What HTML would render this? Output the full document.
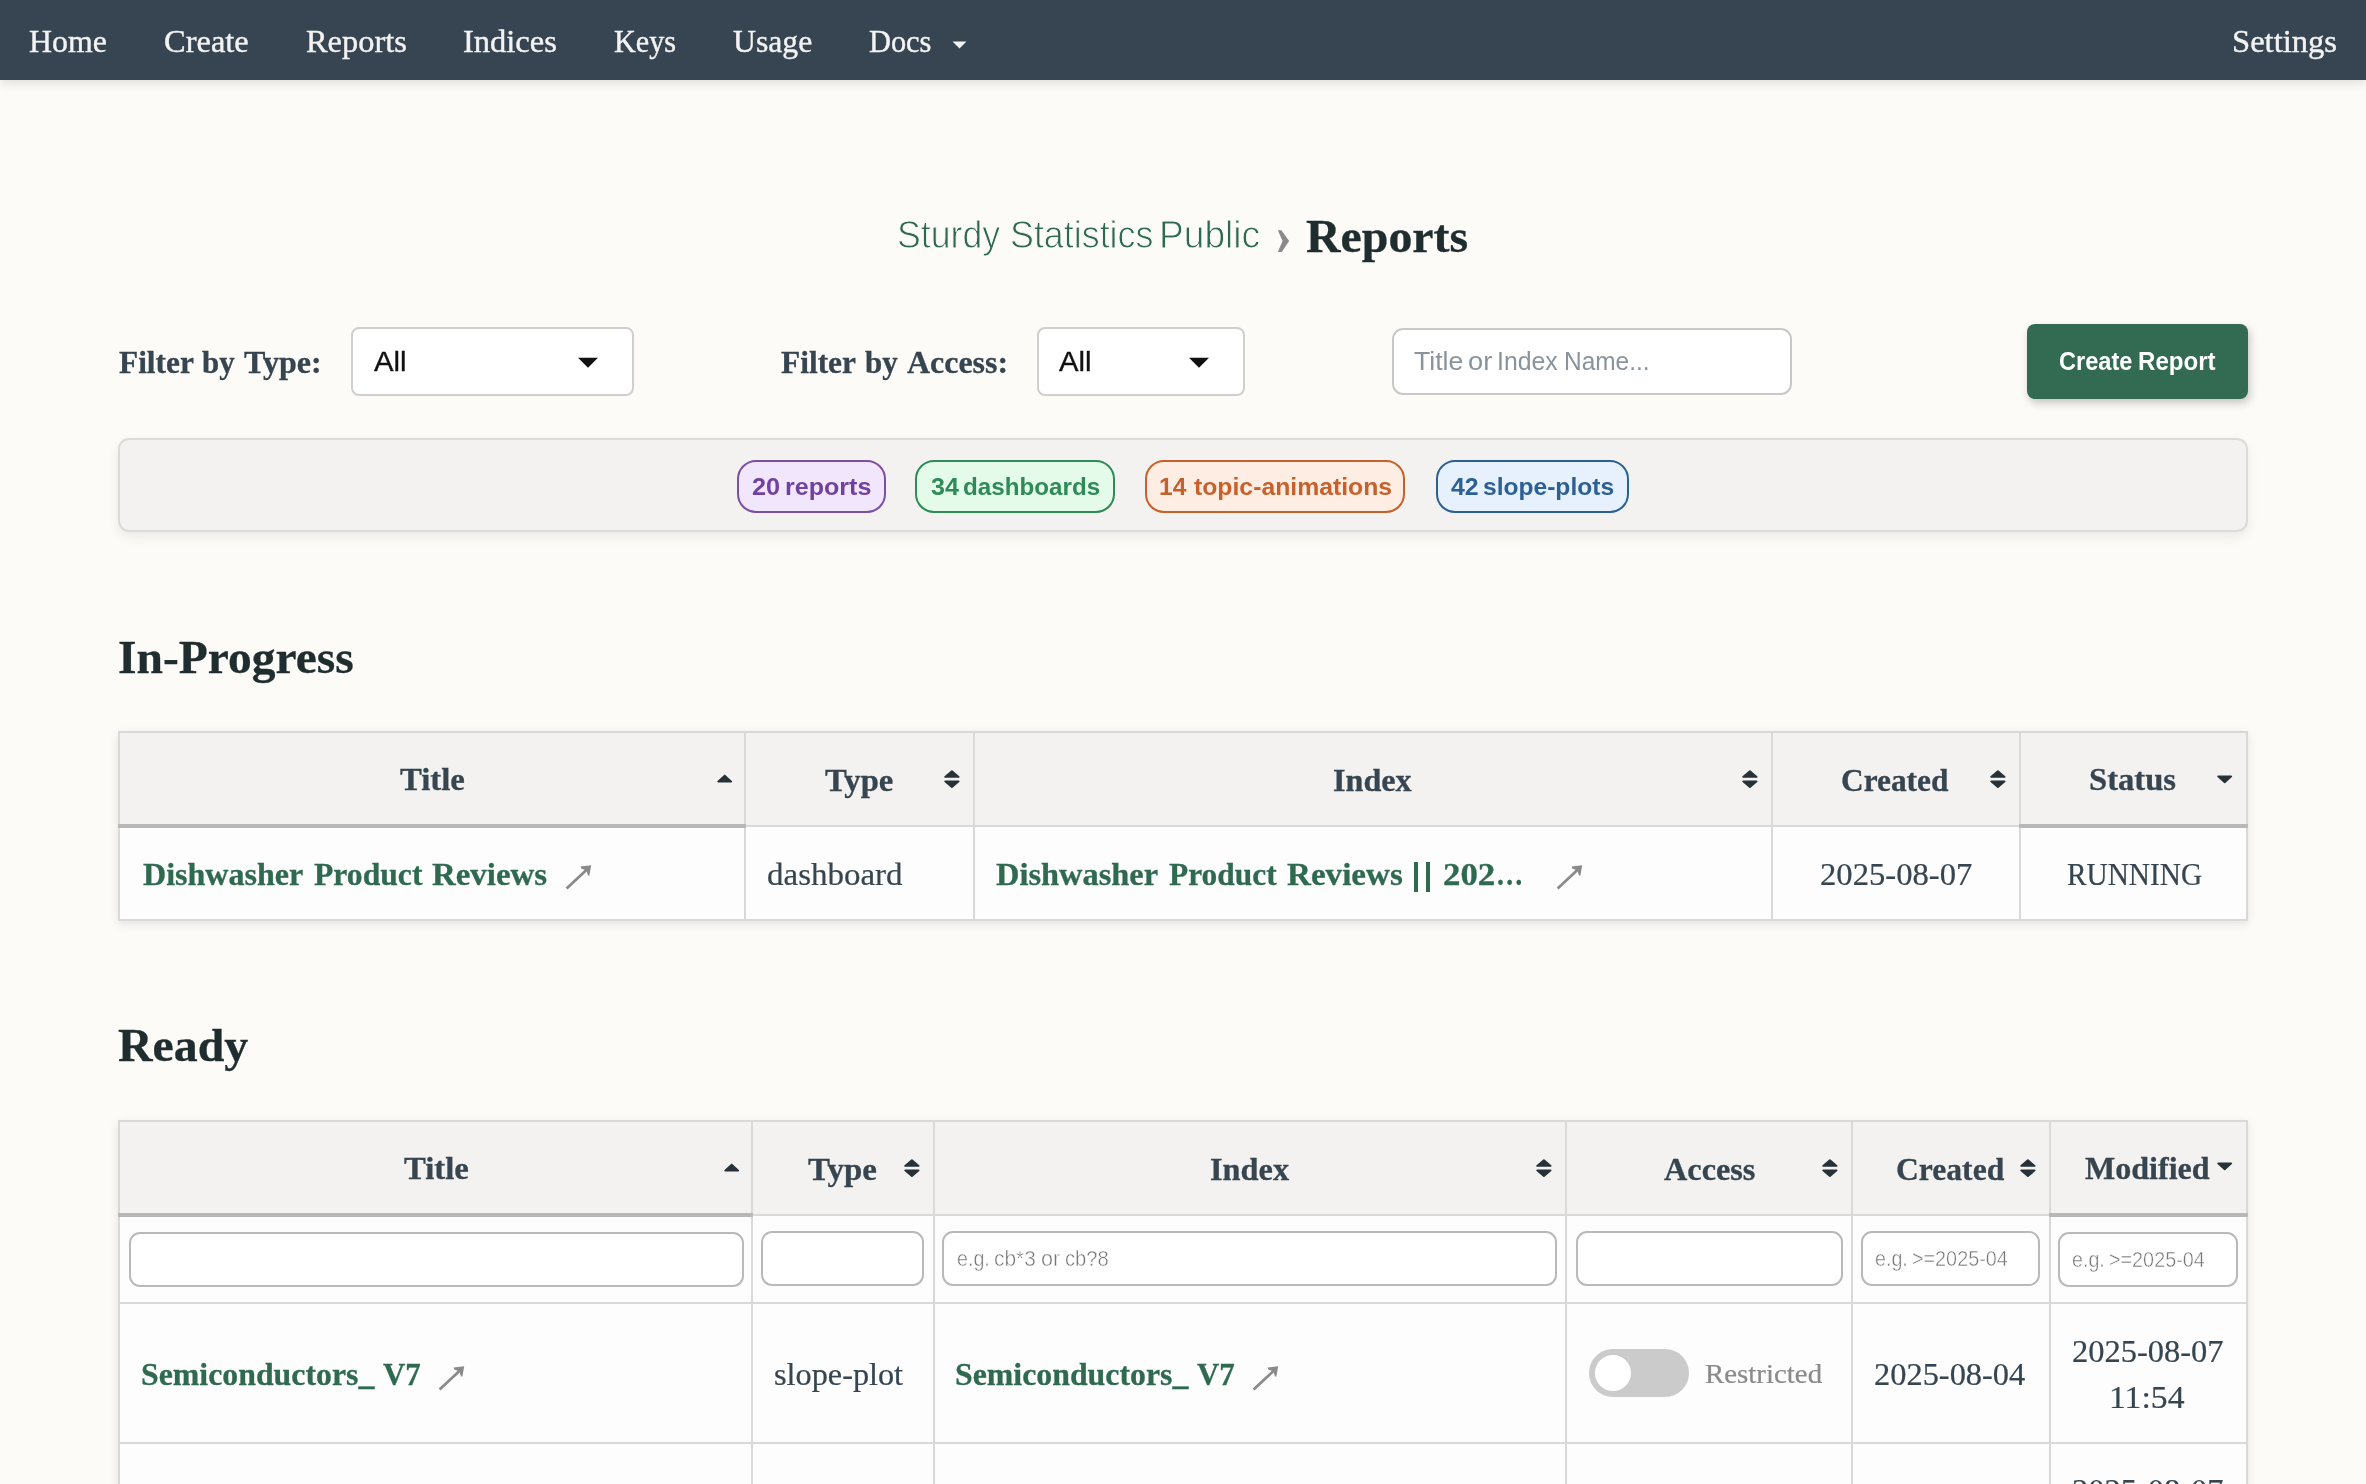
<!DOCTYPE html>
<html lang="en"><head><meta charset="utf-8"><title>Reports</title>
<style>
html,body{margin:0;padding:0;width:2366px;height:1484px;overflow:hidden;background:#fcfbf8}
#pg{position:relative;width:2366px;height:1484px;overflow:hidden;background:#fcfbf8}
#nav{position:absolute;left:0;top:0;width:2366px;height:80px;background:#374552;box-shadow:0 3px 10px rgba(0,0,0,.12)}
#tx{position:absolute;left:0;top:0;width:2366px;height:1484px;will-change:transform}
.r{position:absolute;box-sizing:border-box}
.i{position:absolute;display:block;overflow:visible}
.t{position:absolute;white-space:pre;line-height:1;transform-origin:0 0}
.s{font-family:"Liberation Serif",serif}
.n{font-family:"Liberation Sans",sans-serif}
.b{font-weight:700}
.s{-webkit-text-stroke:0.22px currentColor}
.s.b{-webkit-text-stroke:0.3px currentColor}
</style></head>
<body>
<div id="pg">
<div id="nav"></div>
<svg class="i" style="left:951px;top:40px" width="18" height="10" viewBox="0 0 18 10"><path d="M1.5 1.5h14l-7 7z" fill="#f3f3f3"/></svg>
<svg class="i" style="left:1270px;top:225px" width="26" height="32" viewBox="1270 225 26 32"><path d="M1277.86 230.16H1281.39L1289.14 240.94L1281.73 251.89H1277.86L1282.57 240.94Z" fill="#8a8a8a"/></svg>
<div class="r" style="left:351px;top:327px;width:283px;height:69px;background:#fff;border:2px solid #cfcfcf;border-radius:8px"></div>
<div class="r" style="left:1037px;top:327px;width:208px;height:69px;background:#fff;border:2px solid #cfcfcf;border-radius:8px"></div>
<svg class="i" style="left:576.7px;top:356px" width="22" height="13" viewBox="0 0 22 13"><path d="M1 1.8h20L11 11.8z" fill="#111"/></svg>
<svg class="i" style="left:1187.8px;top:356px" width="22" height="13" viewBox="0 0 22 13"><path d="M1 1.8h20L11 11.8z" fill="#111"/></svg>
<div class="r" style="left:1392px;top:328px;width:400px;height:67px;background:#fff;border:2px solid #c8c8c8;border-radius:11px"></div>
<div class="r" style="left:2027px;top:324px;width:221px;height:75px;background:#326b52;border-radius:8px;box-shadow:2px 4px 9px rgba(0,0,0,.22)"></div>
<div class="r" style="left:118px;top:438px;width:2130px;height:94px;background:#f3f2f0;border:2px solid #dbdbdb;border-radius:11px;box-shadow:0 5px 12px rgba(0,0,0,.07)"></div>
<div class="r" style="left:737px;top:460px;width:149px;height:53px;background:#f1e6fb;border:2px solid #7b4fa3;border-radius:19px"></div>
<div class="r" style="left:915px;top:460px;width:200px;height:53px;background:#e4fbe9;border:2px solid #2e8b57;border-radius:19px"></div>
<div class="r" style="left:1145px;top:460px;width:260px;height:53px;background:#fdede2;border:2px solid #c8602b;border-radius:19px"></div>
<div class="r" style="left:1436px;top:460px;width:193px;height:53px;background:#e6f1fd;border:2px solid #2c5f94;border-radius:19px"></div>
<div class="r" style="left:118px;top:731px;width:2130px;height:190px;background:#fdfdfd;box-shadow:0 3px 9px rgba(0,0,0,.10)"></div>
<div class="r" style="left:118px;top:731px;width:2130px;height:95px;background:#f3f2f0"></div>
<div class="r" style="left:118px;top:731px;width:2130px;height:190px;border:2px solid #d9d9d9"></div>
<div class="r" style="left:118px;top:825px;width:2130px;height:2px;background:#d9d9d9"></div>
<div class="r" style="left:744px;top:731px;width:2px;height:190px;background:#d9d9d9"></div>
<div class="r" style="left:973px;top:731px;width:2px;height:190px;background:#d9d9d9"></div>
<div class="r" style="left:1771px;top:731px;width:2px;height:190px;background:#d9d9d9"></div>
<div class="r" style="left:2019px;top:731px;width:2px;height:190px;background:#d9d9d9"></div>
<div class="r" style="left:118px;top:824px;width:628px;height:4px;background:#b8b8b8"></div>
<div class="r" style="left:2019px;top:824px;width:229px;height:4px;background:#b8b8b8"></div>
<svg class="i" style="left:717.3px;top:774.1px" width="15.4" height="8.8" viewBox="0 0 16 9" preserveAspectRatio="none"><path d="M1.2 8.6h13.6a.9.9 0 0 0 .65-1.55L8.65.9a.92.92 0 0 0-1.3 0L.55 7.05A.9.9 0 0 0 1.2 8.6z" fill="#263238"/></svg>
<svg class="i" style="left:944px;top:769.6px" width="15.8" height="18.3" viewBox="0 0 16 19" preserveAspectRatio="none"><path d="M1.2 8h13.6a.9.9 0 0 0 .65-1.55L8.65.6a.92.92 0 0 0-1.3 0L.55 6.45A.9.9 0 0 0 1.2 8z M1.2 11h13.6a.9.9 0 0 1 .65 1.55L8.65 18.4a.92.92 0 0 1-1.3 0L.55 12.55A.9.9 0 0 1 1.2 11z" fill="#263238"/></svg>
<svg class="i" style="left:1742px;top:770.2px" width="15.8" height="18.3" viewBox="0 0 16 19" preserveAspectRatio="none"><path d="M1.2 8h13.6a.9.9 0 0 0 .65-1.55L8.65.6a.92.92 0 0 0-1.3 0L.55 6.45A.9.9 0 0 0 1.2 8z M1.2 11h13.6a.9.9 0 0 1 .65 1.55L8.65 18.4a.92.92 0 0 1-1.3 0L.55 12.55A.9.9 0 0 1 1.2 11z" fill="#263238"/></svg>
<svg class="i" style="left:1990px;top:770.2px" width="15.8" height="18.3" viewBox="0 0 16 19" preserveAspectRatio="none"><path d="M1.2 8h13.6a.9.9 0 0 0 .65-1.55L8.65.6a.92.92 0 0 0-1.3 0L.55 6.45A.9.9 0 0 0 1.2 8z M1.2 11h13.6a.9.9 0 0 1 .65 1.55L8.65 18.4a.92.92 0 0 1-1.3 0L.55 12.55A.9.9 0 0 1 1.2 11z" fill="#263238"/></svg>
<svg class="i" style="left:2217.2px;top:775.2px" width="15.4" height="8.8" viewBox="0 0 16 9" preserveAspectRatio="none"><path d="M1.2 .4h13.6a.9.9 0 0 1 .65 1.55L8.65 8.1a.92.92 0 0 1-1.3 0L.55 1.95A.9.9 0 0 1 1.2 .4z" fill="#263238"/></svg>
<div class="r" style="left:1414.1px;top:861.6px;width:3.6px;height:30.6px;background:#2f6a50"></div>
<div class="r" style="left:1426.3px;top:861.6px;width:3.6px;height:30.6px;background:#2f6a50"></div>
<svg class="i" style="left:564.5px;top:863.6px" width="28" height="27" viewBox="0 0 28 27"><path d="M1.6 24.6 L22.2 5.2" stroke="#8a8a8a" stroke-width="2.7" fill="none"/><path d="M26.2 1.2 L15.6 2.6 L16.2 4.4 L21.4 6.4 L23 11.4 L24.4 11.6 Z" fill="#8a8a8a"/></svg>
<svg class="i" style="left:1555.5px;top:863.6px" width="28" height="27" viewBox="0 0 28 27"><path d="M1.6 24.6 L22.2 5.2" stroke="#8a8a8a" stroke-width="2.7" fill="none"/><path d="M26.2 1.2 L15.6 2.6 L16.2 4.4 L21.4 6.4 L23 11.4 L24.4 11.6 Z" fill="#8a8a8a"/></svg>
<div class="r" style="left:118px;top:1120px;width:2130px;height:400px;background:#fdfdfd;box-shadow:0 3px 9px rgba(0,0,0,.10)"></div>
<div class="r" style="left:118px;top:1120px;width:2130px;height:95px;background:#f3f2f0"></div>
<div class="r" style="left:118px;top:1120px;width:2130px;height:400px;border:2px solid #d9d9d9"></div>
<div class="r" style="left:118px;top:1214px;width:2130px;height:2px;background:#d9d9d9"></div>
<div class="r" style="left:118px;top:1302px;width:2130px;height:2px;background:#d9d9d9"></div>
<div class="r" style="left:118px;top:1442px;width:2130px;height:2px;background:#d9d9d9"></div>
<div class="r" style="left:751px;top:1120px;width:2px;height:400px;background:#d9d9d9"></div>
<div class="r" style="left:933px;top:1120px;width:2px;height:400px;background:#d9d9d9"></div>
<div class="r" style="left:1565px;top:1120px;width:2px;height:400px;background:#d9d9d9"></div>
<div class="r" style="left:1851px;top:1120px;width:2px;height:400px;background:#d9d9d9"></div>
<div class="r" style="left:2049px;top:1120px;width:2px;height:400px;background:#d9d9d9"></div>
<div class="r" style="left:118px;top:1213px;width:635px;height:4px;background:#b8b8b8"></div>
<div class="r" style="left:2049px;top:1213px;width:199px;height:4px;background:#b8b8b8"></div>
<svg class="i" style="left:724.3px;top:1162.6000000000001px" width="15.4" height="8.8" viewBox="0 0 16 9" preserveAspectRatio="none"><path d="M1.2 8.6h13.6a.9.9 0 0 0 .65-1.55L8.65.9a.92.92 0 0 0-1.3 0L.55 7.05A.9.9 0 0 0 1.2 8.6z" fill="#263238"/></svg>
<svg class="i" style="left:904px;top:1159px" width="15.8" height="18.3" viewBox="0 0 16 19" preserveAspectRatio="none"><path d="M1.2 8h13.6a.9.9 0 0 0 .65-1.55L8.65.6a.92.92 0 0 0-1.3 0L.55 6.45A.9.9 0 0 0 1.2 8z M1.2 11h13.6a.9.9 0 0 1 .65 1.55L8.65 18.4a.92.92 0 0 1-1.3 0L.55 12.55A.9.9 0 0 1 1.2 11z" fill="#263238"/></svg>
<svg class="i" style="left:1536px;top:1159px" width="15.8" height="18.3" viewBox="0 0 16 19" preserveAspectRatio="none"><path d="M1.2 8h13.6a.9.9 0 0 0 .65-1.55L8.65.6a.92.92 0 0 0-1.3 0L.55 6.45A.9.9 0 0 0 1.2 8z M1.2 11h13.6a.9.9 0 0 1 .65 1.55L8.65 18.4a.92.92 0 0 1-1.3 0L.55 12.55A.9.9 0 0 1 1.2 11z" fill="#263238"/></svg>
<svg class="i" style="left:1822px;top:1159px" width="15.8" height="18.3" viewBox="0 0 16 19" preserveAspectRatio="none"><path d="M1.2 8h13.6a.9.9 0 0 0 .65-1.55L8.65.6a.92.92 0 0 0-1.3 0L.55 6.45A.9.9 0 0 0 1.2 8z M1.2 11h13.6a.9.9 0 0 1 .65 1.55L8.65 18.4a.92.92 0 0 1-1.3 0L.55 12.55A.9.9 0 0 1 1.2 11z" fill="#263238"/></svg>
<svg class="i" style="left:2020px;top:1159px" width="15.8" height="18.3" viewBox="0 0 16 19" preserveAspectRatio="none"><path d="M1.2 8h13.6a.9.9 0 0 0 .65-1.55L8.65.6a.92.92 0 0 0-1.3 0L.55 6.45A.9.9 0 0 0 1.2 8z M1.2 11h13.6a.9.9 0 0 1 .65 1.55L8.65 18.4a.92.92 0 0 1-1.3 0L.55 12.55A.9.9 0 0 1 1.2 11z" fill="#263238"/></svg>
<svg class="i" style="left:2217.2px;top:1162.3px" width="15.4" height="8.8" viewBox="0 0 16 9" preserveAspectRatio="none"><path d="M1.2 .4h13.6a.9.9 0 0 1 .65 1.55L8.65 8.1a.92.92 0 0 1-1.3 0L.55 1.95A.9.9 0 0 1 1.2 .4z" fill="#263238"/></svg>
<div class="r" style="left:129px;top:1232.4px;width:615px;height:54.4px;background:#fff;border:2px solid #b9b9b9;border-radius:11px"></div>
<div class="r" style="left:761px;top:1231.4px;width:163px;height:54.4px;background:#fff;border:2px solid #b9b9b9;border-radius:11px"></div>
<div class="r" style="left:942px;top:1231.4px;width:615px;height:54.4px;background:#fff;border:2px solid #b9b9b9;border-radius:11px"></div>
<div class="r" style="left:1576px;top:1231.4px;width:267px;height:54.4px;background:#fff;border:2px solid #b9b9b9;border-radius:11px"></div>
<div class="r" style="left:1861px;top:1231.4px;width:179px;height:54.4px;background:#fff;border:2px solid #b9b9b9;border-radius:11px"></div>
<div class="r" style="left:2058px;top:1232.4px;width:180px;height:54.4px;background:#fff;border:2px solid #b9b9b9;border-radius:11px"></div>
<svg class="i" style="left:438px;top:1364.6px" width="28" height="27" viewBox="0 0 28 27"><path d="M1.6 24.6 L22.2 5.2" stroke="#8a8a8a" stroke-width="2.7" fill="none"/><path d="M26.2 1.2 L15.6 2.6 L16.2 4.4 L21.4 6.4 L23 11.4 L24.4 11.6 Z" fill="#8a8a8a"/></svg>
<svg class="i" style="left:1252px;top:1364.6px" width="28" height="27" viewBox="0 0 28 27"><path d="M1.6 24.6 L22.2 5.2" stroke="#8a8a8a" stroke-width="2.7" fill="none"/><path d="M26.2 1.2 L15.6 2.6 L16.2 4.4 L21.4 6.4 L23 11.4 L24.4 11.6 Z" fill="#8a8a8a"/></svg>
<div class="r" style="left:1589px;top:1349px;width:100px;height:48px;background:#cbcbcb;border-radius:24px"></div>
<div class="r" style="left:1594.6px;top:1354.6px;width:36.6px;height:36.6px;background:#fff;border-radius:50%"></div>
<div id="tx">
<span class="t s" style="left:29.02px;top:26px;font-size:31.45px;transform:scaleX(1.0134);color:#f3f3f3;-webkit-text-stroke:0.4px currentColor">Home</span>
<span class="t s" style="left:164.37px;top:26px;font-size:31.45px;transform:scaleX(1.0327);color:#f3f3f3;-webkit-text-stroke:0.4px currentColor">Create</span>
<span class="t s" style="left:306.43px;top:26px;font-size:31.45px;transform:scaleX(1.0306);color:#f3f3f3;-webkit-text-stroke:0.4px currentColor">Reports</span>
<span class="t s" style="left:462.78px;top:26px;font-size:31.45px;transform:scaleX(1.0330);color:#f3f3f3;-webkit-text-stroke:0.4px currentColor">Indices</span>
<span class="t s" style="left:613.91px;top:26px;font-size:31.45px;transform:scaleX(0.9607);color:#f3f3f3;-webkit-text-stroke:0.4px currentColor">Keys</span>
<span class="t s" style="left:732.50px;top:26px;font-size:31.45px;transform:scaleX(1.0081);color:#f3f3f3;-webkit-text-stroke:0.4px currentColor">Usage</span>
<span class="t s" style="left:868.90px;top:26px;font-size:31.45px;transform:scaleX(0.9657);color:#f3f3f3;-webkit-text-stroke:0.4px currentColor">Docs</span>
<span class="t s" style="left:2232.25px;top:26px;font-size:31.45px;transform:scaleX(1.0368);color:#f3f3f3;-webkit-text-stroke:0.4px currentColor">Settings</span>
<span class="t n" style="left:897.10px;top:215px;font-size:39.13px;transform:scaleX(0.9113);color:#2f6a50;-webkit-text-stroke:0.9px #fcfbf8">Sturdy</span>
<span class="t n" style="left:1009.89px;top:215px;font-size:39.13px;transform:scaleX(0.9161);color:#2f6a50;-webkit-text-stroke:0.9px #fcfbf8">Statistics</span>
<span class="t n" style="left:1159.46px;top:215px;font-size:39.13px;transform:scaleX(0.9490);color:#2f6a50;-webkit-text-stroke:0.9px #fcfbf8">Public</span>
<span class="t s b" style="left:1306.12px;top:214px;font-size:45.76px;transform:scaleX(1.0456);color:#1f2d2f;">Reports</span>
<span class="t s b" style="left:118.81px;top:347px;font-size:31.29px;transform:scaleX(1.0022);color:#36454f;">Filter</span>
<span class="t s b" style="left:202.49px;top:347px;font-size:31.29px;transform:scaleX(0.9869);color:#36454f;">by</span>
<span class="t s b" style="left:244.41px;top:347px;font-size:31.29px;transform:scaleX(1.0244);color:#36454f;">Type:</span>
<span class="t s b" style="left:780.81px;top:347px;font-size:31.29px;transform:scaleX(1.0041);color:#36454f;">Filter</span>
<span class="t s b" style="left:865.29px;top:347px;font-size:31.29px;transform:scaleX(0.9893);color:#36454f;">by</span>
<span class="t s b" style="left:907.31px;top:347px;font-size:31.29px;transform:scaleX(1.0206);color:#36454f;">Access:</span>
<span class="t n" style="left:373.60px;top:347px;font-size:28.41px;transform:scaleX(1.0299);color:#111;-webkit-text-stroke:0.35px currentColor">All</span>
<span class="t n" style="left:1059.00px;top:347px;font-size:28.41px;transform:scaleX(1.0299);color:#111;-webkit-text-stroke:0.35px currentColor">All</span>
<span class="t n" style="left:1414.29px;top:348px;font-size:26.67px;transform:scaleX(0.9982);color:#8a939c;">Title</span>
<span class="t n" style="left:1468.40px;top:348px;font-size:26.67px;transform:scaleX(1.0224);color:#8a939c;">or</span>
<span class="t n" style="left:1496.96px;top:348px;font-size:26.67px;transform:scaleX(0.9302);color:#8a939c;">Index</span>
<span class="t n" style="left:1563.88px;top:348px;font-size:26.67px;transform:scaleX(0.9170);color:#8a939c;">Name...</span>
<span class="t n b" style="left:2059.49px;top:349px;font-size:25.94px;transform:scaleX(0.9101);color:#ffffff;">Create</span>
<span class="t n b" style="left:2138.30px;top:349px;font-size:25.94px;transform:scaleX(0.9285);color:#ffffff;">Report</span>
<span class="t n b" style="left:752.09px;top:475px;font-size:24.64px;transform:scaleX(1.0270);color:#6f42a0;">20</span>
<span class="t n b" style="left:785.04px;top:475px;font-size:24.64px;transform:scaleX(1.0179);color:#6f42a0;">reports</span>
<span class="t n b" style="left:930.62px;top:475px;font-size:24.64px;transform:scaleX(1.0191);color:#2e8b57;">34</span>
<span class="t n b" style="left:963.19px;top:475px;font-size:24.64px;transform:scaleX(0.9825);color:#2e8b57;">dashboards</span>
<span class="t n b" style="left:1159.30px;top:475px;font-size:24.64px;transform:scaleX(0.9979);color:#c8602b;">14</span>
<span class="t n b" style="left:1193.77px;top:475px;font-size:24.64px;transform:scaleX(1.0055);color:#c8602b;">topic-animations</span>
<span class="t n b" style="left:1451.13px;top:475px;font-size:24.64px;transform:scaleX(1.0102);color:#2c5f94;">42</span>
<span class="t n b" style="left:1483.41px;top:475px;font-size:24.64px;transform:scaleX(0.9980);color:#2c5f94;">slope-plots</span>
<span class="t s b" style="left:118.01px;top:635px;font-size:45.76px;transform:scaleX(1.0384);color:#1f2d2f;">In-Progress</span>
<span class="t s b" style="left:118.33px;top:1023px;font-size:45.92px;transform:scaleX(1.0426);color:#1f2d2f;">Ready</span>
<span class="t s b" style="left:399.77px;top:764px;font-size:31.92px;transform:scaleX(1.0260);color:#36454f;">Title</span>
<span class="t s b" style="left:825.17px;top:765px;font-size:31.92px;transform:scaleX(1.0235);color:#36454f;">Type</span>
<span class="t s b" style="left:1333.35px;top:765px;font-size:31.92px;transform:scaleX(1.0076);color:#36454f;">Index</span>
<span class="t s b" style="left:1841.42px;top:765px;font-size:31.92px;transform:scaleX(0.9822);color:#36454f;">Created</span>
<span class="t s b" style="left:2089.46px;top:764px;font-size:31.92px;transform:scaleX(1.0222);color:#36454f;">Status</span>
<span class="t s b" style="left:142.54px;top:859px;font-size:31.76px;transform:scaleX(1.0095);color:#2f6a50;">Dishwasher</span>
<span class="t s b" style="left:313.80px;top:859px;font-size:31.76px;transform:scaleX(0.9971);color:#2f6a50;">Product</span>
<span class="t s b" style="left:432.33px;top:859px;font-size:31.76px;transform:scaleX(1.0364);color:#2f6a50;">Reviews</span>
<span class="t s" style="left:767.35px;top:859px;font-size:31.76px;transform:scaleX(1.0391);color:#36454f;">dashboard</span>
<span class="t s b" style="left:996.11px;top:859px;font-size:31.76px;transform:scaleX(1.0209);color:#2f6a50;">Dishwasher</span>
<span class="t s b" style="left:1169.00px;top:859px;font-size:31.76px;transform:scaleX(0.9897);color:#2f6a50;">Product</span>
<span class="t s b" style="left:1286.52px;top:859px;font-size:31.76px;transform:scaleX(1.0423);color:#2f6a50;">Reviews</span>
<span class="t s b" style="left:1442.70px;top:859px;font-size:31.76px;transform:scaleX(1.0973);color:#2f6a50;">202</span>
<span class="t s b" style="left:1496.09px;top:859px;font-size:31.76px;transform:scaleX(0.8570);color:#2f6a50;">…</span>
<span class="t s" style="left:1819.96px;top:859px;font-size:31.76px;transform:scaleX(1.0287);color:#36454f;">2025-08-07</span>
<span class="t s" style="left:2066.84px;top:859px;font-size:31.76px;transform:scaleX(0.9224);color:#36454f;">RUNNING</span>
<span class="t s b" style="left:403.58px;top:1153px;font-size:31.92px;transform:scaleX(1.0252);color:#36454f;">Title</span>
<span class="t s b" style="left:808.36px;top:1154px;font-size:31.92px;transform:scaleX(1.0309);color:#36454f;">Type</span>
<span class="t s b" style="left:1209.50px;top:1154px;font-size:31.92px;transform:scaleX(1.0131);color:#36454f;">Index</span>
<span class="t s b" style="left:1663.71px;top:1154px;font-size:31.92px;transform:scaleX(1.0118);color:#36454f;">Access</span>
<span class="t s b" style="left:1896.17px;top:1154px;font-size:31.92px;transform:scaleX(0.9905);color:#36454f;">Created</span>
<span class="t s b" style="left:2085.19px;top:1153px;font-size:31.92px;transform:scaleX(1.0045);color:#36454f;">Modified</span>
<span class="t n" style="left:956.74px;top:1248px;font-size:22.32px;transform:scaleX(0.8822);color:#787878;-webkit-text-stroke:0.45px #fff">e.g.</span>
<span class="t n" style="left:993.83px;top:1248px;font-size:22.32px;transform:scaleX(0.9364);color:#787878;-webkit-text-stroke:0.45px #fff">cb*3</span>
<span class="t n" style="left:1040.81px;top:1248px;font-size:22.32px;transform:scaleX(0.9674);color:#787878;-webkit-text-stroke:0.45px #fff">or</span>
<span class="t n" style="left:1065.32px;top:1248px;font-size:22.32px;transform:scaleX(0.9048);color:#787878;-webkit-text-stroke:0.45px #fff">cb?8</span>
<span class="t n" style="left:1875.14px;top:1248px;font-size:22.32px;transform:scaleX(0.8800);color:#787878;-webkit-text-stroke:0.45px #fff">e.g.</span>
<span class="t n" style="left:1911.85px;top:1248px;font-size:22.32px;transform:scaleX(0.8870);color:#787878;-webkit-text-stroke:0.45px #fff">&gt;=2025-04</span>
<span class="t n" style="left:2072.34px;top:1249px;font-size:22.32px;transform:scaleX(0.8800);color:#787878;-webkit-text-stroke:0.45px #fff">e.g.</span>
<span class="t n" style="left:2109.05px;top:1249px;font-size:22.32px;transform:scaleX(0.8870);color:#787878;-webkit-text-stroke:0.45px #fff">&gt;=2025-04</span>
<span class="t s b" style="left:140.83px;top:1359px;font-size:31.76px;transform:scaleX(1.0023);color:#2f6a50;">Semiconductors_</span>
<span class="t s b" style="left:382.82px;top:1359px;font-size:31.76px;transform:scaleX(0.9713);color:#2f6a50;">V7</span>
<span class="t s" style="left:773.60px;top:1359px;font-size:31.76px;transform:scaleX(1.0166);color:#36454f;">slope-plot</span>
<span class="t s b" style="left:955.23px;top:1359px;font-size:31.76px;transform:scaleX(1.0023);color:#2f6a50;">Semiconductors_</span>
<span class="t s b" style="left:1197.22px;top:1359px;font-size:31.76px;transform:scaleX(0.9713);color:#2f6a50;">V7</span>
<span class="t s" style="left:1704.64px;top:1360px;font-size:28.31px;transform:scaleX(1.0209);color:#8a8a8a;">Restricted</span>
<span class="t s" style="left:1874.40px;top:1359px;font-size:31.76px;transform:scaleX(1.0211);color:#36454f;">2025-08-04</span>
<span class="t s" style="left:2072.20px;top:1336px;font-size:31.76px;transform:scaleX(1.0230);color:#36454f;">2025-08-07</span>
<span class="t s" style="left:2109.33px;top:1382px;font-size:31.76px;transform:scaleX(1.0608);color:#36454f;">11:54</span>
<span class="t s" style="left:2071.80px;top:1475px;font-size:31.76px;transform:scaleX(1.0220);color:#36454f;">2025-08-07</span>
</div>
</div>
</body></html>
